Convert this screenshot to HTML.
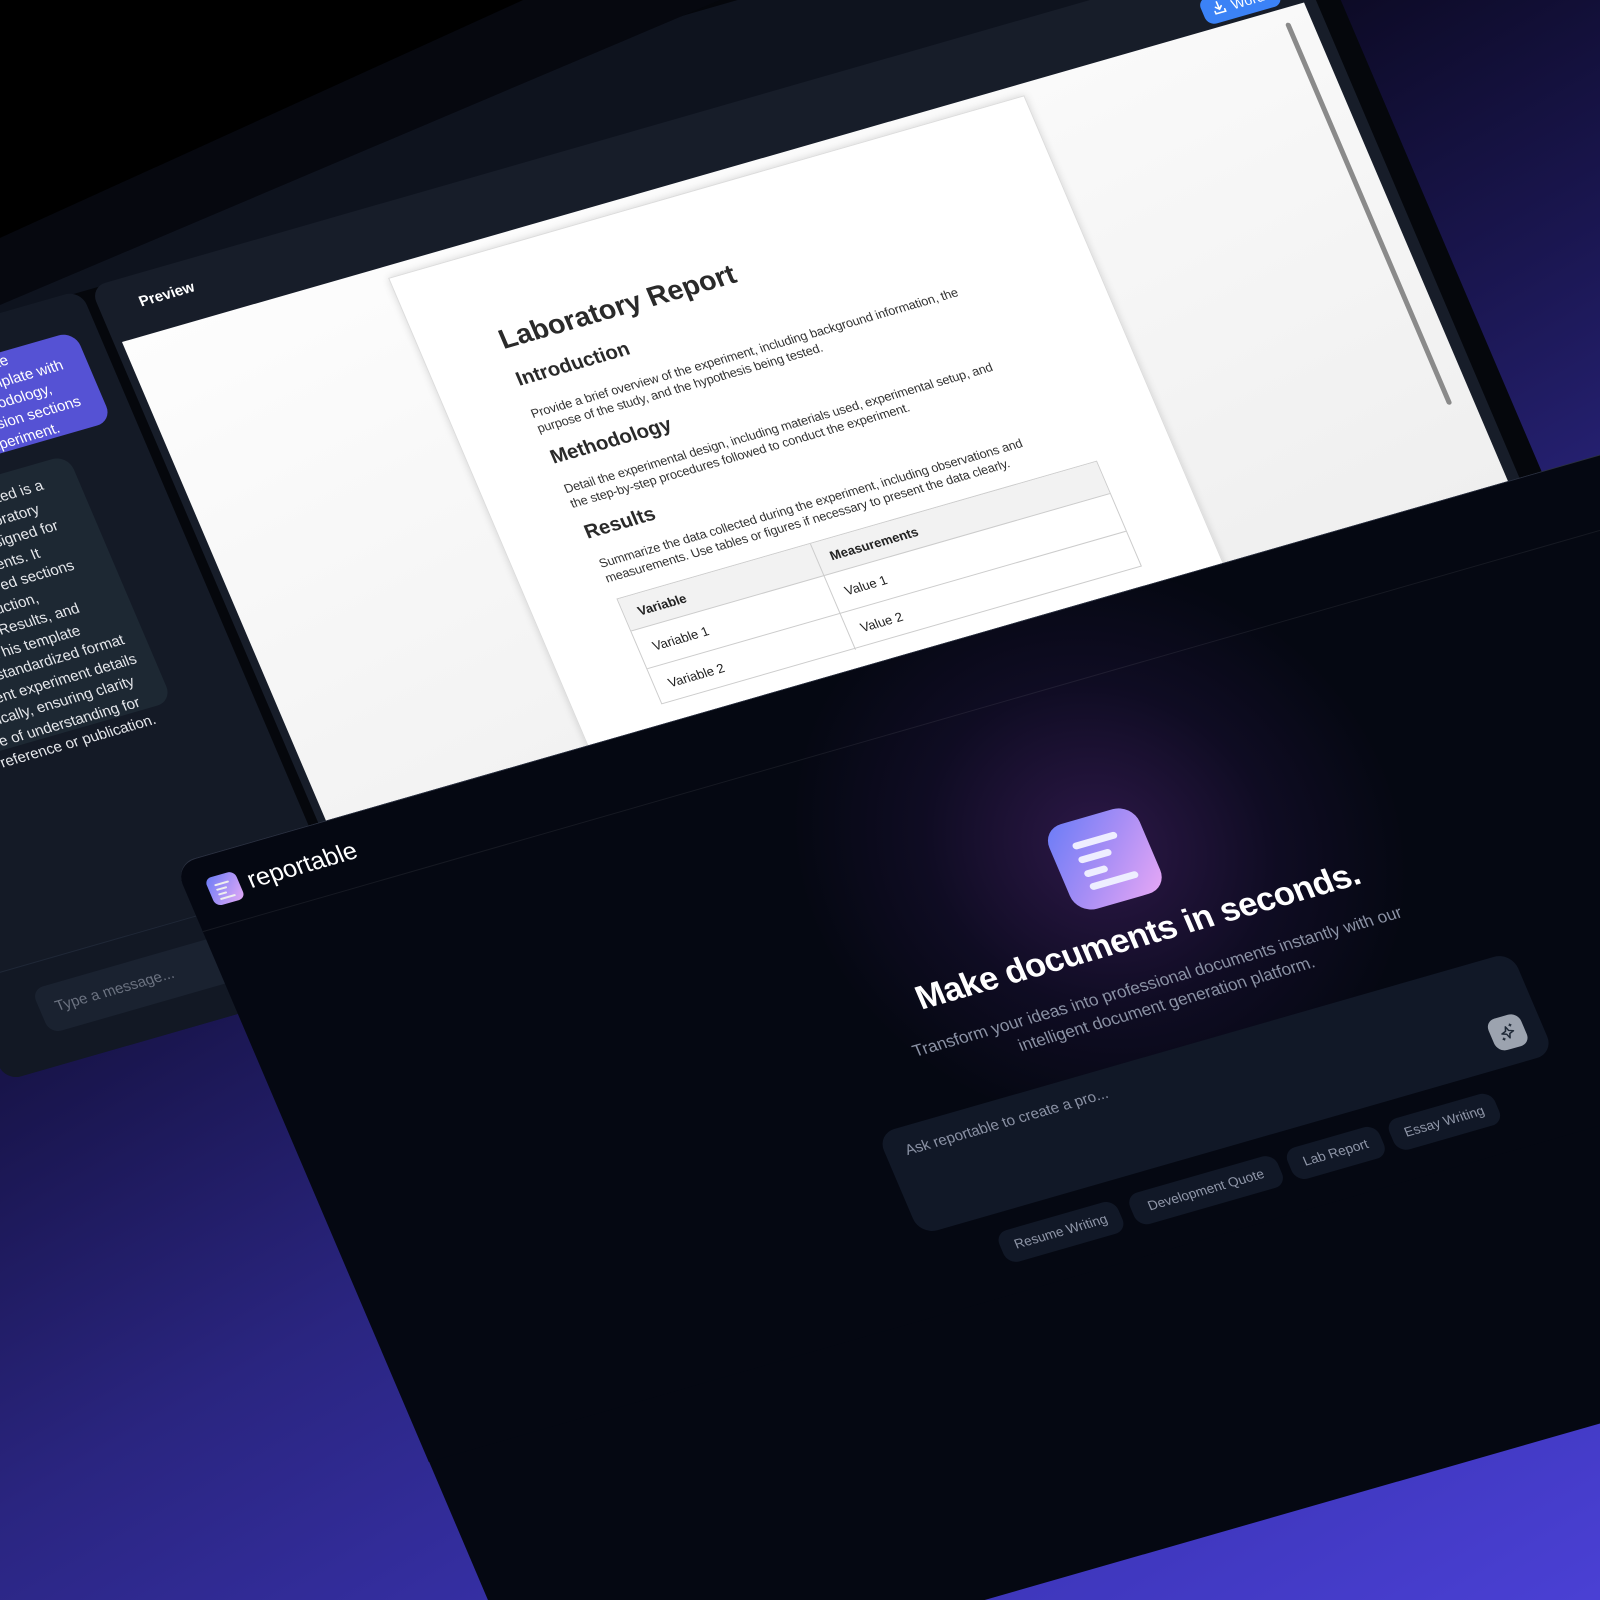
<!DOCTYPE html>
<html><head><meta charset="utf-8"><style>
*{box-sizing:border-box;margin:0;padding:0}
html,body{width:1600px;height:1600px;overflow:hidden}
body{font-family:"Liberation Sans",sans-serif}
#root{position:relative;width:1600px;height:1600px;overflow:hidden;background:linear-gradient(150deg,#000 12%,#0c0a24 30%,#1a1650 45%,#2a2580 60%,#3b34b5 82%,#4a40d4 100%)}
.abs{position:absolute}
.tf{position:absolute;left:0;top:0;transform-origin:0 0}
.doc p{position:absolute;white-space:nowrap;color:#333;font-size:12.6px;line-height:16px;letter-spacing:-0.1px}
.doc h{position:absolute;white-space:nowrap;color:#2a2a2a;font-weight:bold;display:block}
.chip{position:absolute;top:585px;height:34px;border-radius:12px;background:#111827;color:#8f96a8;font-size:13.5px;line-height:34px;text-align:center}
.rt{position:absolute;text-align:right;white-space:nowrap}
.rt span{display:block}
</style></head><body><div id="root">

<!-- BACK PANEL -->
<div class="tf" style="transform:matrix(0.961,-0.276,0.392,0.92,122,342)">
  <div class="abs" style="left:-380px;top:-400px;width:1645px;height:1080px;background:#05070c;border-radius:20px"></div>
  <div class="abs" style="left:-380px;top:-160px;width:1625px;height:100px;background:#0e131e"></div>
  <div class="abs" style="left:-400px;top:-62px;width:382px;height:745px;background:#141a26;border-radius:16px;overflow:hidden">
    <div class="abs" style="left:-40px;top:38px;width:400px;height:98px;background:#5552d4;border-radius:16px"></div>
    <div class="rt" style="right:44px;top:38px;color:#fff;font-size:15px;line-height:20px">
      <span style="margin-right:51px">Please create a laboratory report template</span>
      <span style="margin-right:2px">with a clear report template with</span>
      <span style="margin-right:22px">introduction, methodology,</span>
      <span style="margin-right:0px">results, and conclusion sections</span>
      <span style="margin-right:30px">for a science experiment.</span>
    </div>
    <div class="abs" style="left:-40px;top:156px;width:345px;height:268px;background:#1d2833;border-radius:16px"></div>
    <div class="rt" style="right:94px;top:168px;color:#e5e7eb;font-size:15px;line-height:21.5px">
      <span style="margin-right:18px">The document I've just generated is a</span>
      <span style="margin-right:31px">comprehensive laboratory</span>
      <span style="margin-right:20px">report template designed for</span>
      <span style="margin-right:48px">scientific experiments. It</span>
      <span style="margin-right:21px">includes structured sections</span>
      <span style="margin-right:67px">like Introduction,</span>
      <span style="margin-right:33px">Methodology, Results, and</span>
      <span style="margin-right:41px">Conclusion. This template</span>
      <span style="margin-right:4px">provides a standardized format</span>
      <span style="margin-right:0px">to document experiment details</span>
      <span style="margin-right:11px">systematically, ensuring clarity</span>
      <span style="margin-right:14px">and ease of understanding for</span>
      <span style="margin-right:6px">future reference or publication.</span>
    </div>
    <div class="abs" style="left:0;top:638px;width:382px;height:107px;background:#121824;border-top:1px solid #1f2736"></div>
    <div class="abs" style="left:60px;top:664px;width:300px;height:48px;background:#1a2230;border-radius:12px;color:#6b7280;font-size:15px;line-height:48px;padding-left:16px">Type a message...</div>
  </div>
  <div class="abs" style="left:-8px;top:-62px;width:1250px;height:742px;background:#171d29;border-radius:16px;overflow:hidden">
    <div class="abs" style="left:40px;top:20px;color:#fff;font-weight:bold;font-size:15px">Preview</div>
    <div class="abs" style="left:1140px;top:30px;width:78px;height:28px;background:#3b82f6;border-radius:9px;color:#fff;font-size:14px;line-height:28px;padding-left:30px">Word
      <svg class="abs" style="left:10px;top:6px" width="14" height="15" viewBox="0 0 14 15"><path d="M7 1v8M4 6l3 3 3-3M2 10v2.5h10V10" fill="none" stroke="#fff" stroke-width="1.6" stroke-linecap="round"/></svg></div>
    <div class="abs" style="left:8px;top:62px;width:1230px;height:680px;background:linear-gradient(170deg,#fdfdfd,#ececec)"></div>
    <div class="abs" style="left:1212px;top:77px;width:5px;height:415px;background:#8a8a8a;border-radius:3px"></div>
  </div>
  <div class="abs doc" style="left:272px;top:12px;width:662px;height:660px;background:#fff;border:1px solid #dcdcdc;box-shadow:0 0 8px rgba(0,0,0,.15)">
    <h style="left:78px;top:76px;font-size:28px;line-height:30px">Laboratory Report</h>
    <h style="left:78px;top:123px;font-size:20px;line-height:22px">Introduction</h>
    <p style="left:78px;top:163px">Provide a brief overview of the experiment, including background information, the<br>purpose of the study, and the hypothesis being tested.</p>
    <h style="left:79px;top:208px;font-size:20px;line-height:22px">Methodology</h>
    <p style="left:79px;top:245px">Detail the experimental design, including materials used, experimental setup, and<br>the step-by-step procedures followed to conduct the experiment.</p>
    <h style="left:81px;top:290px;font-size:20px;line-height:22px">Results</h>
    <p style="left:82px;top:327px">Summarize the data collected during the experiment, including observations and<br>measurements. Use tables or figures if necessary to present the data clearly.</p>
    <div class="abs" style="left:84px;top:373px;width:500px;height:115px;border:1px solid #ccc;font-size:13px;color:#222">
      <div class="abs" style="left:0;top:0;width:498px;height:35px;background:#f2f2f2;border-bottom:1px solid #ccc"></div>
      <div class="abs" style="left:200px;top:0;width:1px;height:115px;background:#ccc"></div>
      <div class="abs" style="left:0;top:75px;width:498px;height:1px;background:#ccc"></div>
      <div class="abs" style="left:14px;top:10px;font-weight:bold">Variable</div>
      <div class="abs" style="left:214px;top:10px;font-weight:bold">Measurements</div>
      <div class="abs" style="left:14px;top:48px">Variable 1</div>
      <div class="abs" style="left:214px;top:48px">Value 1</div>
      <div class="abs" style="left:14px;top:88px">Variable 2</div>
      <div class="abs" style="left:214px;top:88px">Value 2</div>
    </div>
  </div>
</div>

<svg class="abs" style="left:0;top:0" width="1600" height="1600">
  <polygon points="0,238 523,0 720,0 0,305" fill="#06080f"/>
  <polygon points="0,0 523,0 0,238" fill="#000"/>
  <polygon points="190,900 1760,409 2128,1272 542,1727" fill="#050812"/>
</svg>

<!-- FRONT PANEL content -->
<div class="tf" style="transform:matrix(0.961,-0.276,0.392,0.92,174,864)">
  <div class="abs" style="left:0;top:0;width:1650px;height:650px;background:#050812;border-radius:22px 0 0 0;overflow:hidden;border-top:1px solid #2a3040">
    <div class="abs" style="left:565px;top:-60px;width:600px;height:600px;border-radius:50%;background:radial-gradient(circle,rgba(110,50,160,.38) 0%,rgba(60,30,110,.18) 40%,rgba(5,8,18,0) 70%)"></div>
    <div class="abs" style="left:22px;top:22px;width:31px;height:30px;border-radius:7px;background:linear-gradient(135deg,#6b7cf6,#e4a9f6)">
      <div class="abs" style="left:7px;top:8px;width:15px;height:2px;background:#eee;border-radius:1px"></div>
      <div class="abs" style="left:7px;top:13px;width:11px;height:2px;background:#eee;border-radius:1px"></div>
      <div class="abs" style="left:7px;top:18px;width:9px;height:2px;background:#eee;border-radius:1px"></div>
      <div class="abs" style="left:7px;top:23px;width:16px;height:2px;background:#eee;border-radius:1px"></div>
    </div>
    <div class="abs" style="left:62px;top:22px;color:#fff;font-size:25px;line-height:28px">reportable</div>
    <div class="abs" style="left:0;top:72px;width:1650px;height:1px;background:rgba(255,255,255,.07)"></div>

    <div class="abs" style="left:818px;top:207px;width:94px;height:92px;border-radius:20px;background:linear-gradient(135deg,#6a7cf7 0%,#a88ef5 50%,#e8a8f5 100%)">
      <div class="abs" style="left:22px;top:22px;width:46px;height:7px;background:#eef;border-radius:4px"></div>
      <div class="abs" style="left:22px;top:37px;width:34px;height:7px;background:#eef;border-radius:4px"></div>
      <div class="abs" style="left:22px;top:52px;width:24px;height:7px;background:#eef;border-radius:4px"></div>
      <div class="abs" style="left:22px;top:66px;width:50px;height:7px;background:#eef;border-radius:4px"></div>
    </div>
    <div class="abs" style="left:565px;top:318px;width:600px;text-align:center;color:#fff;font-weight:bold;font-size:34px;letter-spacing:-0.5px;white-space:nowrap">Make documents in seconds.</div>
    <div class="abs" style="left:515px;top:375px;width:700px;text-align:center;color:#8b92a5;font-size:17px;line-height:24px;white-space:nowrap">Transform your ideas into professional documents instantly with our<br>intelligent document generation platform.</div>

    <div class="abs" style="left:545px;top:456px;width:660px;height:110px;background:#111827;border-radius:18px">
      <div class="abs" style="left:20px;top:16px;color:#8b92a5;font-size:15px">Ask reportable to create a pro...</div>
      <div class="abs" style="left:608px;top:60px;width:34px;height:34px;background:#9ca3af;border-radius:10px">
        <svg class="abs" style="left:7px;top:7px" width="20" height="20" viewBox="0 0 20 20"><path d="M10 4l1.6 4.4L16 10l-4.4 1.6L10 16l-1.6-4.4L4 10l4.4-1.6z" fill="none" stroke="#1f2937" stroke-width="1.5" stroke-linejoin="round"/><path d="M15 2v3M13.5 3.5h3M4 14v3M2.5 15.5h3" stroke="#1f2937" stroke-width="1.3"/></svg>
      </div>
    </div>
    <div class="chip" style="left:615px;width:124px">Resume Writing</div>
    <div class="chip" style="left:751px;width:154px">Development Quote</div>
    <div class="chip" style="left:915px;width:96px">Lab Report</div>
    <div class="chip" style="left:1021px;width:110px">Essay Writing</div>
  </div>
</div>

</div></body></html>
